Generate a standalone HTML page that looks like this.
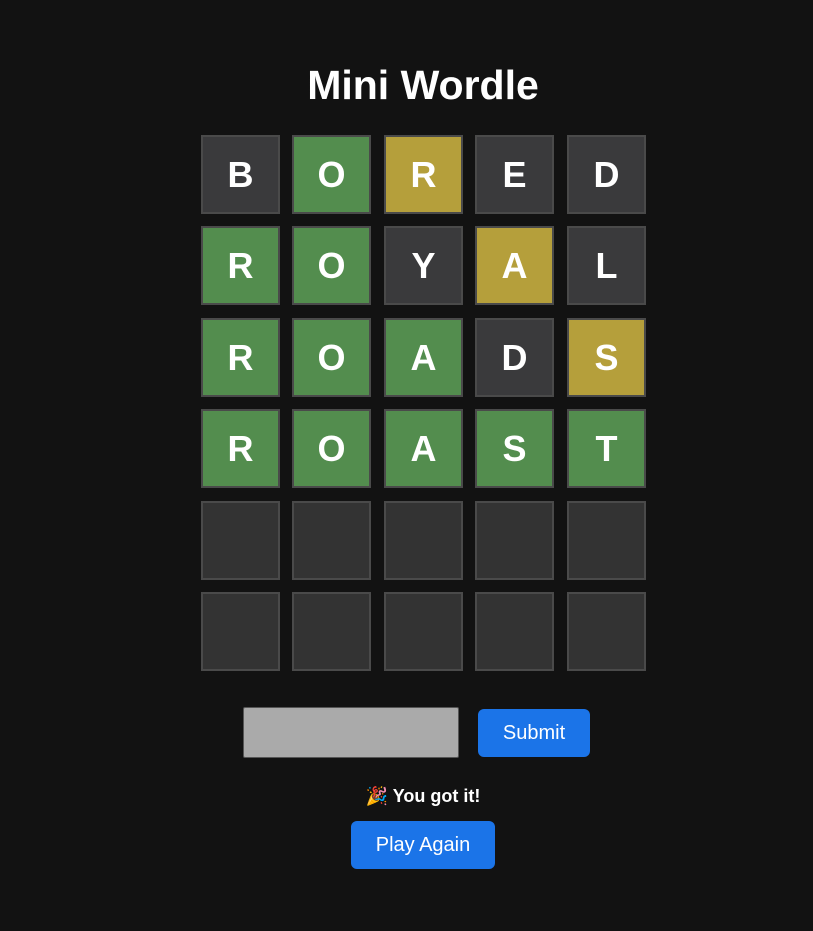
<!DOCTYPE html>
<html><head><meta charset="utf-8"><style>
body{margin:0;background:#121212;width:813px;height:931px;position:relative;font-family:"Liberation Sans",sans-serif;color:#fff;overflow:hidden}
h1{position:absolute;top:62px;left:0;width:846px;text-align:center;margin:0;font-size:41px;font-weight:bold;line-height:46px}
.t{position:absolute;width:75px;height:75px;border:2px solid #4a4a4a;display:flex;align-items:center;justify-content:center;font-weight:bold;font-size:36px;background:#333}
.x{background:#3a3a3c}.g{background:#538d4e}.y{background:#b59f3b}
.in{position:absolute;left:243px;top:707px;width:214px;height:49px;background:#aaa;border:1px solid #555;border-radius:2px}
.b{position:absolute;background:#1b74e8;border-radius:6px;color:#fff;font-size:20px;display:flex;align-items:center;justify-content:center}
.msg{position:absolute;top:786px;left:0;width:846px;text-align:center;font-weight:bold;font-size:18px}
</style></head><body>
<h1>Mini Wordle</h1>
<div id="g"></div>
<div class="in"></div>
<div class="b" style="left:478px;top:709px;width:112px;height:48px">Submit</div>
<div class="msg">🎉 You got it!</div>
<div class="b" style="left:351px;top:821px;width:144px;height:48px">Play Again</div>
<script>
var rows=[["B","x","O","g","R","y","E","x","D","x"],["R","g","O","g","Y","x","A","y","L","x"],["R","g","O","g","A","g","D","x","S","y"],["R","g","O","g","A","g","S","g","T","g"]];
var xs=[201,292,384,475,567],ys=[135,226,318,409,501,592],h="";
for(var r=0;r<6;r++)for(var c=0;c<5;c++){var l="",k="";if(rows[r]){l=rows[r][c*2];k=rows[r][c*2+1];}
h+='<div class="t '+k+'" style="left:'+xs[c]+'px;top:'+ys[r]+'px">'+l+'</div>';}
document.getElementById("g").innerHTML=h;
</script>
</body></html>
